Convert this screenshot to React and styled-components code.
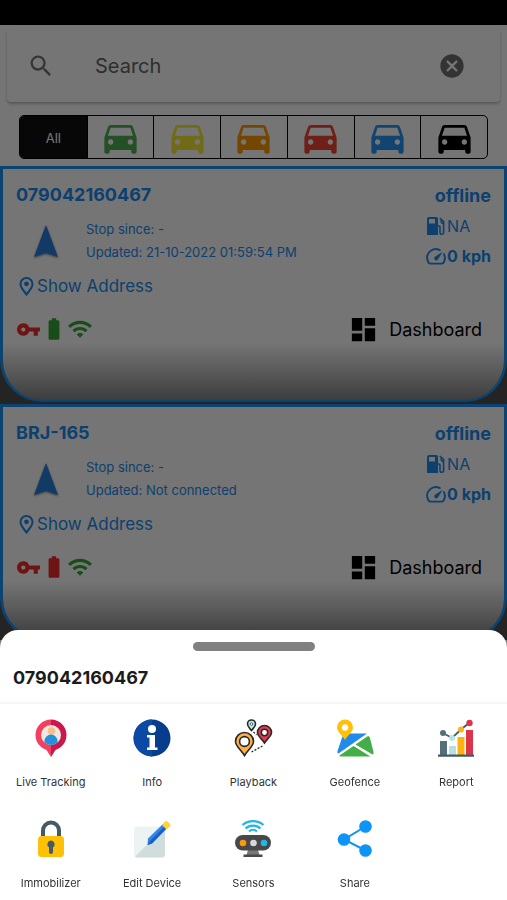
import React, { useState } from 'react'
import styled, { createGlobalStyle } from 'styled-components'
import {
  MdSearch,
  MdCancel,
  MdVpnKey,
  MdBatteryFull,
  MdWifi,
  MdDashboard,
  MdDirectionsCar
} from 'react-icons/md'

const GlobalStyle = createGlobalStyle`
  * {
    box-sizing: border-box;
  }

  body {
    margin: 0;
    background: #fff;
    font-family: Inter, 'Open Sans', sans-serif;
  }

  button {
    font-family: inherit;
    cursor: pointer;
  }
`

const Screen = styled.div`
  height: 100vh;
  overflow: hidden;
`

const StatusBar = styled.div`
  height: 25px;
  background: #000;
`

const SearchBox = styled.label`
  display: flex;
  align-items: center;
  height: 73px;
  margin: 4px 7px 13px;
  padding: 0 34px 0 20px;
  border-radius: 4px;
  background: #fff;
  box-shadow: 0 2px 3px rgba(0, 0, 0, 0.25);
  color: #757575;

  .search-icon {
    flex: none;
  }
`

const SearchInput = styled.input`
  flex: 1;
  min-width: 0;
  margin-left: 40px;
  padding: 0;
  border: 0;
  outline: 0;
  background: transparent;
  font-family: inherit;
  font-size: 20px;
  color: #333;

  &::placeholder {
    color: #666;
    opacity: 1;
  }
`

const ClearButton = styled.button`
  display: flex;
  padding: 0;
  border: 0;
  background: none;
  color: #707070;
`

const Filters = styled.div`
  display: grid;
  grid-template-columns: repeat(7, 1fr);
  height: 44px;
  margin: 0 19px 7px;
  border: 1px solid #000;
  border-radius: 5px;
  overflow: hidden;
`

const FilterButton = styled.button`
  display: flex;
  align-items: center;
  justify-content: center;
  padding: 0;
  border: 0;
  border-left: ${({ $first }) => ($first ? '0' : '1px solid #000')};
  background: ${({ $active }) => ($active ? '#111' : 'transparent')};
  color: ${({ $color }) => $color};
  font-size: 13px;
`

const DeviceList = styled.div`
  background: #505050;
`

const Card = styled.article`
  height: 236px;
  margin-bottom: 2px;
  padding: 14px 13px 0;
  border: 3px solid #1b93f5;
  border-bottom-width: 2px;
  border-radius: 0 0 42px 42px;
  background: linear-gradient(#fff 0, #fff 75%, #ccc 86%, #858585 100%);
  color: #1b8cf0;
`

const CardTop = styled.div`
  display: flex;
  justify-content: space-between;
  height: 91px;
`

const Name = styled.h2`
  margin: 0;
  font-size: 18px;
  line-height: 24px;
  font-weight: 700;
`

const Status = styled.div`
  display: flex;
  align-items: center;
  margin-top: 11px;
`

const Arrow = styled.svg`
  width: 30px;
  height: 40px;
  margin: 0 25px 0 15px;
  filter: drop-shadow(0 1px 1px rgba(0, 0, 0, 0.5));
`

const Times = styled.div`
  font-size: 13px;
  line-height: 23px;
`

const Readings = styled.div`
  display: grid;
  grid-template-columns: 21px auto;
  grid-template-rows: 24px 38px 22px;
  align-content: start;
  align-items: center;
  font-size: 16px;

  strong {
    font-weight: 700;
  }
`

const Offline = styled.strong`
  grid-column: 1 / -1;
  justify-self: end;
  font-size: 18px;
`

const AddressLink = styled.a`
  display: flex;
  align-items: center;
  gap: 2px;
  height: 24px;
  padding-left: 2px;
  color: inherit;
  font-size: 17px;
  text-decoration: none;
`

const CardBottom = styled.div`
  display: flex;
  align-items: center;
  justify-content: space-between;
  height: 26px;
  margin-top: 18px;
  padding-right: 9px;
`

const Signals = styled.div`
  display: flex;
  align-items: center;
`

const DashboardButton = styled.button`
  display: flex;
  align-items: center;
  gap: 10px;
  padding: 0;
  border: 0;
  background: none;
  color: #000;
  font-size: 18px;
`

const Backdrop = styled.div`
  position: fixed;
  inset: 0;
  display: flex;
  flex-direction: column;
  justify-content: flex-end;
  background: rgba(0, 0, 0, 0.54);
`

const Sheet = styled.section`
  padding-top: 12px;
  border-radius: 18px 18px 0 0;
  background: #fff;
`

const Handle = styled.div`
  width: 122px;
  height: 9px;
  margin: 0 auto;
  border-radius: 5px;
  background: #808080;
`

const SheetTitle = styled.h2`
  margin: 0;
  padding: 15px 13px 12px;
  border-bottom: 2px solid #f5f5f5;
  color: #1b1b1b;
  font-size: 18px;
  line-height: 24px;
  font-weight: 700;
`

const Actions = styled.div`
  display: grid;
  grid-template-columns: repeat(5, 1fr);
  grid-auto-rows: 81px;
  row-gap: 20px;
  padding-top: 14px;
`

const ActionButton = styled.button`
  display: flex;
  flex-direction: column;
  align-items: center;
  gap: 16px;
  padding: 0;
  border: 0;
  background: none;
  color: #333;
  font-size: 11px;
  line-height: 16px;

  svg {
    width: 40px;
    height: 40px;
  }
`

const PinIcon = () => (
  <svg width="17" height="20" viewBox="0 0 17 20" fill="none" stroke="currentColor" strokeWidth="2" aria-hidden="true">
    <path d="M8.500 18.500C6.500 15.500 2.500 12 2.500 8a6 6 0 0 1 12 0c0 4-4 7.500-6 10.500z" />
    <circle cx="8.500" cy="7.800" r="2.400" fill="currentColor" stroke="none" />
  </svg>
)

const FuelIcon = () => (
  <svg width="20" height="20" viewBox="0 0 20 20" fill="none" aria-hidden="true">
    <path fill="currentColor" d="M3 1h7a2 2 0 0 1 2 2v16H1V3a2 2 0 0 1 2-2zM3 3v4.500h6V3z" fillRule="evenodd" />
    <path stroke="currentColor" strokeWidth="1.600" d="M12 10h1a1 1 0 0 1 1 1v5.500a1.800 1.800 0 0 0 3.600 0V5.500L13.800 2M15.300 3.500v2a2 2 0 0 0 2.200 2" />
  </svg>
)

const SpeedIcon = () => (
  <svg width="21" height="20" viewBox="0 0 22 20" fill="none" stroke="currentColor" strokeWidth="2" strokeLinecap="round" aria-hidden="true">
    <path d="M14.500 3.800A9 9 0 0 0 2 15.300Q2.700 18 4.500 18h12q1.800 0 2.700-2.700a9 9 0 0 0-.4-7.300" />
    <path fill="currentColor" stroke="none" d="M17.500 5.500l-4.800 8a2.200 2.200 0 1 1-3-3z" />
  </svg>
)

const LiveTrackingIcon = () => (
  <svg viewBox="0 0 40 40" aria-hidden="true">
    <path fill="#f43f5e" d="M20 1.500A15.500 15.500 0 0 0 4.500 17C4.500 25 10 30 15.500 32L20 39z" />
    <path fill="#c9184a" d="M20 1.500A15.500 15.500 0 0 1 35.500 17C35.500 25 30 30 24.500 32L20 39z" />
    <circle cx="20" cy="17" r="10" fill="#f0e9e2" />
    <circle cx="20.500" cy="13" r="3.800" fill="#f9bd88" />
    <path fill="#2491df" d="M13.500 24.500V23a6.500 6.500 0 0 1 13 0v1.500a10 10 0 0 1-13 0z" />
  </svg>
)

const InfoIcon = () => (
  <svg viewBox="0 0 40 40" aria-hidden="true">
    <circle cx="20" cy="20" r="18.500" fill="#073d8c" />
    <path fill="#0c49a4" d="M20 1.500a18.500 18.500 0 0 0 0 37z" />
    <circle cx="20" cy="11" r="4" fill="#fff" />
    <path fill="#fff" d="M15 17h8v12.500h2.500V32H15v-2.500h2.500v-10H15z" />
  </svg>
)

const PlaybackIcon = () => (
  <svg viewBox="0 0 40 40" stroke="#292929" strokeWidth="1.600" fill="none" aria-hidden="true">
    <path fill="#b8eeee" d="M18.500 12.500C16.500 10 14.500 8.500 14.500 6a4 4 0 0 1 8 0c0 2.500-2 4-4 6.500z" />
    <circle cx="18.500" cy="6" r="1.300" fill="#fff" strokeWidth=".7" />
    <path fill="#e53950" d="M31.500 25C29 21 24.500 18 24.500 14.500a7 7 0 0 1 14 0C38.500 18 34 21 31.500 25z" />
    <circle cx="31.500" cy="14.500" r="3.200" fill="#fff" />
    <path fill="#ffb04a" d="M11.500 37.500C8.500 32 2.500 28.500 2.500 23.500a9 9 0 0 1 18 0c0 5-6 8.500-9 14z" />
    <circle cx="11.500" cy="23.500" r="4.900" fill="#fff" />
    <path strokeWidth="1.300" strokeDasharray="2 1.500" d="M18.500 34l11-6M20.500 14l3 3" />
  </svg>
)

const GeofenceIcon = () => (
  <svg viewBox="0 0 40 40" aria-hidden="true">
    <path fill="#218bea" d="M8.500 15.500h23.500L3.500 35.500Q2 35.500 2.500 33z" />
    <path fill="#43ad48" d="M20.500 26.500L33 18q1.300 0 1.900 1.700L38.500 34q.5 2-1 2.500z" />
    <path fill="#43ad48" d="M18.500 28l17 10.500H5.500Q4 38.500 4.500 37.500z" />
    <path fill="#ffc108" d="M10 22C7.500 17 2 14.500 2 9.500a8 8 0 0 1 16 0c0 5-5.500 7.500-8 12.500z" />
    <circle cx="10" cy="9.500" r="3.200" fill="#fff" />
  </svg>
)

const ReportIcon = () => (
  <svg viewBox="0 0 40 40" aria-hidden="true">
    <path fill="none" stroke="#455a64" strokeWidth="1.800" d="M7 15l9 5 9-8.500L33 5" />
    <path fill="#546e7a" d="M4 23h7v14H4z" />
    <path fill="#b8dfe3" d="M13 28h7v9h-7z" />
    <path fill="#ffb30f" d="M21.500 19h7v18h-7z" />
    <path fill="#dc354b" d="M30 12h7v25h-7z" />
    <path fill="#455a64" d="M2 36.500h36v2.200H2z" />
    <circle cx="7" cy="15" r="3" fill="#546e7a" />
    <circle cx="16" cy="20" r="3" fill="#b8e4e8" />
    <circle cx="25" cy="11.500" r="3" fill="#ffb30f" />
    <circle cx="33.500" cy="5" r="3.200" fill="#dc354b" />
  </svg>
)

const LockIcon = () => (
  <svg viewBox="0 0 40 40" aria-hidden="true">
    <path fill="none" stroke="#455a64" strokeWidth="4" d="M12 20v-8.500a8 8 0 0 1 16 0V20" />
    <rect x="7" y="17" width="26" height="21" rx="3.500" fill="#ffc107" />
    <path fill="#455a64" d="M20 21.500a3.700 3.700 0 0 0-2 6.800V33a2 2 0 0 0 4 0v-4.700a3.700 3.700 0 0 0-2-6.800z" />
  </svg>
)

const EditIcon = () => (
  <svg viewBox="0 0 40 40" aria-hidden="true">
    <rect x="2" y="7.500" width="31" height="31" rx="3" fill="#edf2f2" />
    <path fill="#cfdddd" d="M3 37.500l30-29V35.500a3 3 0 0 1-3 3H5q-1.500 0-2-1z" />
    <path fill="#2f86ea" d="M16 19.500L31 5l4 4L20 24.500 15.500 26z" />
    <path fill="#1b5fc6" d="M18 22L33 7l2 2L20 24.500 15.500 26z" />
    <path fill="#ffd42e" d="M30 6l3-3.500q1.200-1.200 2.400 0l2.600 2.600q1.200 1.200 0 2.400L34.500 10.500z" />
  </svg>
)

const SensorsIcon = () => (
  <svg viewBox="0 0 40 40" aria-hidden="true">
    <path fill="none" stroke="#21b5e8" strokeWidth="2.200" d="M9.500 6a16 16 0 0 1 21 0M12.500 9.500a11 11 0 0 1 15 0M16 12.500a6 6 0 0 1 8 0" />
    <path fill="#777" d="M15 31h10l1.500 5h-13z" />
    <path fill="#4a4a4a" d="M10.500 35.500h19V38h-19z" />
    <rect x="2" y="16" width="36" height="15.500" rx="7.750" fill="#484848" />
    <circle cx="10" cy="24" r="3.300" fill="#ff980f" />
    <circle cx="20.500" cy="24" r="3.300" fill="#d7d7dc" />
    <circle cx="31" cy="24" r="3.300" fill="#20b8e6" />
  </svg>
)

const ShareIcon = () => (
  <svg viewBox="0 0 40 40" fill="#0c95f7" aria-hidden="true">
    <path fill="none" stroke="#0c95f7" strokeWidth="2" d="M30.500 7.500L9 20.500l21.500 11" />
    <circle cx="9" cy="20.500" r="6.300" />
    <circle cx="30.500" cy="7.500" r="6.300" />
    <circle cx="30.500" cy="31.500" r="6.300" />
  </svg>
)

const filters = [
  { name: 'Moving', color: '#4caf50' },
  { name: 'Idle', color: '#f5e932' },
  { name: 'Alert', color: '#ff9800' },
  { name: 'Stopped', color: '#f44336' },
  { name: 'Offline', color: '#2196f3' },
  { name: 'Expired', color: '#000' }
]

const devices = [
  { name: '079042160467', updated: '21-10-2022 01:59:54 PM', battery: '#35a83a' },
  { name: 'BRJ-165', updated: 'Not connected', battery: '#f12c2c' }
]

const actions = [
  { name: 'Live Tracking', Icon: LiveTrackingIcon },
  { name: 'Info', Icon: InfoIcon },
  { name: 'Playback', Icon: PlaybackIcon },
  { name: 'Geofence', Icon: GeofenceIcon },
  { name: 'Report', Icon: ReportIcon },
  { name: 'Immobilizer', Icon: LockIcon },
  { name: 'Edit Device', Icon: EditIcon },
  { name: 'Sensors', Icon: SensorsIcon },
  { name: 'Share', Icon: ShareIcon }
]

const DeviceCard = ({ device }) => (
  <Card>
    <CardTop>
      <div>
        <Name>{device.name}</Name>
        <Status>
          <Arrow viewBox="0 0 30 40" aria-hidden="true">
            <path fill="#287fe0" d="M15 4l12 32-12-4-12 4z" />
          </Arrow>
          <Times>
            <div>Stop since: -</div>
            <div>Updated: {device.updated}</div>
          </Times>
        </Status>
      </div>
      <Readings>
        <Offline>offline</Offline>
        <FuelIcon />
        <span>NA</span>
        <SpeedIcon />
        <strong>0 kph</strong>
      </Readings>
    </CardTop>
    <AddressLink href="#address">
      <PinIcon />
      Show Address
    </AddressLink>
    <CardBottom>
      <Signals>
        <MdVpnKey size={25} color="#f12c2c" />
        <MdBatteryFull size={26} color={device.battery} />
        <MdWifi size={26} color="#35a83a" />
      </Signals>
      <DashboardButton type="button">
        <MdDashboard size={31} />
        Dashboard
      </DashboardButton>
    </CardBottom>
  </Card>
)

const App = () => {
  const [query, setQuery] = useState('')

  return (
    <Screen>
      <GlobalStyle />
      <StatusBar />
      <SearchBox>
        <MdSearch className="search-icon" size={28} />
        <SearchInput
          aria-label="Search"
          placeholder="Search"
          value={query}
          onChange={(event) => setQuery(event.target.value)}
        />
        <ClearButton type="button" aria-label="Clear search" onClick={() => setQuery('')}>
          <MdCancel size={28} />
        </ClearButton>
      </SearchBox>
      <Filters>
        <FilterButton type="button" $first $active $color="#fff">
          All
        </FilterButton>
        {filters.map(({ name, color }) => (
          <FilterButton type="button" key={name} aria-label={name} $color={color}>
            <MdDirectionsCar size={43} />
          </FilterButton>
        ))}
      </Filters>
      <DeviceList>
        {devices.map((device) => (
          <DeviceCard device={device} key={device.name} />
        ))}
      </DeviceList>
      <Backdrop>
        <Sheet>
          <Handle />
          <SheetTitle>{devices[0].name}</SheetTitle>
          <Actions>
            {actions.map(({ name, Icon }) => (
              <ActionButton type="button" key={name}>
                <Icon />
                {name}
              </ActionButton>
            ))}
          </Actions>
        </Sheet>
      </Backdrop>
    </Screen>
  )
}

export default App
